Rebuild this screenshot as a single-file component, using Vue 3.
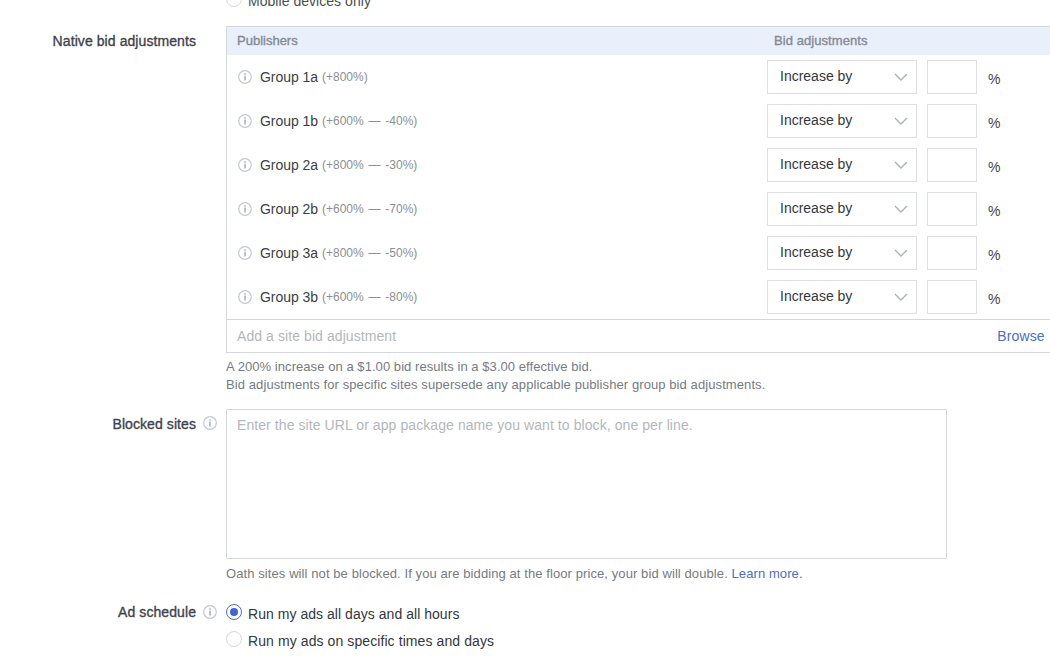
<script setup>
const groups = [
  { name: 'Group 1a', range: '(+800%)' },
  { name: 'Group 1b', range: '(+600% — -40%)' },
  { name: 'Group 2a', range: '(+800% — -30%)' },
  { name: 'Group 2b', range: '(+600% — -70%)' },
  { name: 'Group 3a', range: '(+800% — -50%)' },
  { name: 'Group 3b', range: '(+600% — -80%)' },
]
</script>

<template>
  <div class="viewport">
    <div class="page">
      <section class="row top-row">
        <div class="label-col"></div>
        <div class="field">
          <label class="radio-line"><span class="radio"></span><span>Mobile devices only</span></label>
        </div>
      </section>

      <section class="row bids-row">
        <div class="label-col"><span class="label">Native bid adjustments</span></div>
        <div class="field">
          <div class="bid-table">
            <div class="bid-head">
              <span class="head-pub">Publishers</span>
              <span class="head-bid">Bid adjustments</span>
            </div>
            <div class="bid-rows">
              <div v-for="g in groups" :key="g.name" class="bid-row">
                <div class="pub">
                  <svg class="info" viewBox="0 0 14 14" width="14" height="14"><circle cx="7" cy="7" r="6.3" fill="none" stroke="#c4c9cf" stroke-width="1.2"/><circle cx="7" cy="4.1" r="1" fill="#bcc1c7"/><rect x="6" y="5.7" width="2" height="4.8" fill="#bcc1c7"/></svg>
                  <span class="pub-name">{{ g.name }}</span>
                  <span class="pub-range">{{ g.range }}</span>
                </div>
                <div class="select">
                  <span>Increase by</span>
                  <svg class="chev" viewBox="0 0 14 8" width="14" height="8"><path d="M1 1l6 6 6-6" fill="none" stroke="#a9afb6" stroke-width="1.3"/></svg>
                </div>
                <div class="pct-input"></div>
                <span class="pct">%</span>
              </div>
            </div>
            <div class="site-row">
              <span class="placeholder">Add a site bid adjustment</span>
              <a class="browse">Browse</a>
            </div>
          </div>
          <p class="help help-bids"><span class="help-first">A 200% increase on a $1.00 bid results in a $3.00 effective bid.</span><br>Bid adjustments for specific sites supersede any applicable publisher group bid adjustments.</p>
        </div>
      </section>

      <section class="row blocked-row">
        <div class="label-col">
          <span class="label">Blocked sites</span>
          <svg class="info label-info" viewBox="0 0 14 14" width="14" height="14"><circle cx="7" cy="7" r="6.3" fill="none" stroke="#c4c9cf" stroke-width="1.2"/><circle cx="7" cy="4.1" r="1" fill="#bcc1c7"/><rect x="6" y="5.7" width="2" height="4.8" fill="#bcc1c7"/></svg>
        </div>
        <div class="field">
          <div class="textarea"><span class="placeholder">Enter the site URL or app package name you want to block, one per line.</span></div>
          <p class="help help-blocked">Oath sites will not be blocked. If you are bidding at the floor price, your bid will double. <a class="link">Learn more.</a></p>
        </div>
      </section>

      <section class="row schedule-row">
        <div class="label-col">
          <span class="label">Ad schedule</span>
          <svg class="info label-info" viewBox="0 0 14 14" width="14" height="14"><circle cx="7" cy="7" r="6.3" fill="none" stroke="#c4c9cf" stroke-width="1.2"/><circle cx="7" cy="4.1" r="1" fill="#bcc1c7"/><rect x="6" y="5.7" width="2" height="4.8" fill="#bcc1c7"/></svg>
        </div>
        <div class="field">
          <label class="radio-line"><span class="radio on"></span><span>Run my ads all days and all hours</span></label>
          <label class="radio-line second"><span class="radio"></span><span class="wide">Run my ads on specific times and days</span></label>
        </div>
      </section>
    </div>
  </div>
</template>

<style>
html, body { margin: 0; overflow: hidden; background: #fff; }
</style>

<style scoped>
.viewport {
  width: 1050px;
  height: 670px;
  overflow: hidden;
  font-family: "Liberation Sans", Arial, sans-serif;
  font-size: 14px;
  color: #33373d;
  background: #fff;
}
.page { margin-top: -8px; }
.row { display: flex; align-items: flex-start; }
.label-col {
  width: 226px;
  flex: none;
  box-sizing: border-box;
  display: flex;
  justify-content: flex-end;
  align-items: center;
  padding-right: 30px;
  position: relative;
}
.label { color: #3f444b; -webkit-text-stroke: 0.35px #3f444b; line-height: 18px; letter-spacing: 0.08px; }
.label-info { position: absolute; left: 203px; top: 1px; }
.field { flex: none; width: 824px; min-width: 0; }

.top-row { height: 34px; }
.radio-line { display: flex; align-items: center; height: 18px; line-height: 18px; letter-spacing: 0.04px; }
.wide { letter-spacing: 0.09px; }
.radio {
  width: 14px;
  height: 14px;
  border: 1px solid #d5d8dc;
  border-radius: 50%;
  margin-right: 6px;
  flex: none;
  position: relative;
  top: -2px;
  background: #fff;
}
.radio.on { border-color: #4a6fd0; }
.radio.on::after {
  content: "";
  position: absolute;
  left: 3px; top: 3px;
  width: 8px; height: 8px;
  border-radius: 50%;
  background: #3f67cf;
}
.top-row .radio-line { color: #4a4e54; }

.bids-row .label-col { padding-top: 6px; }
.bid-table {
  width: 840px;
  border: 1px solid #d3d7dc;
  box-sizing: border-box;
  height: 327px;
}
.bid-head {
  height: 28px;
  padding-bottom: 2px;
  box-sizing: border-box;
  background: #e9effb;
  display: flex;
  align-items: center;
  color: #858b94;
  -webkit-text-stroke: 0.35px #858b94;
  font-size: 13px;
}
.head-pub { width: 547px; padding-left: 10px; box-sizing: border-box; }
.head-bid { letter-spacing: 0.07px; }
.bid-rows { height: 264px; }
.bid-row {
  height: 44px;
  display: flex;
  align-items: center;
  padding-left: 11px;
  box-sizing: border-box;
}
.pub { width: 529px; display: flex; align-items: center; flex: none; margin-top: -1px; }
.info { flex: none; }
.pub-name { margin-left: 8px; color: #3b3f45; letter-spacing: -0.05px; }
.pub-range { margin-left: 4px; font-size: 12px; color: #8a8f96; word-spacing: 1.5px; }
.select {
  width: 150px;
  height: 34px;
  border: 1px solid #dcdfe3;
  box-sizing: border-box;
  display: flex;
  align-items: center;
  justify-content: space-between;
  padding: 0 8px 2px 12px;
  flex: none;
}
.chev { margin-top: 1px; }
.pct-input {
  width: 50px;
  height: 34px;
  border: 1px solid #dcdfe3;
  box-sizing: border-box;
  margin-left: 10px;
  flex: none;
}
.pct { margin-left: 11px; margin-top: 3px; color: #3f444b; }
.site-row {
  height: 33px;
  border-top: 1px solid #d3d7dc;
  box-sizing: border-box;
  display: flex;
  align-items: center;
  padding-left: 10px;
}
.placeholder { color: #b3b7bc; letter-spacing: 0.08px; }
.browse { margin-left: 601px; color: #4a6fc4; letter-spacing: 0.15px; }
.help { margin: 0; font-size: 13px; line-height: 17px; color: #757b83; letter-spacing: 0.09px; }
.help-first { letter-spacing: 0.06px; }
.help-bids { margin-top: 5px; line-height: 18px; }
.blocked-row { margin-top: 15px; }
.blocked-row .label-col { padding-top: 6px; }
.blocked-row .label-info { top: 7px; }
.textarea {
  width: 721px;
  height: 150px;
  border: 1px solid #d3d7dc;
  border-radius: 2px;
  box-sizing: border-box;
  padding: 6px 10px;
  line-height: 18px;
}
.help-blocked { margin-top: 6px; }
.link { color: #4a6fc4; }
.schedule-row { margin-top: 21px; }
.schedule-row .label-info { top: 2px; }
.schedule-row .radio-line { margin-top: 2px; }
.schedule-row .radio-line.second { margin-top: 9px; }
</style>
